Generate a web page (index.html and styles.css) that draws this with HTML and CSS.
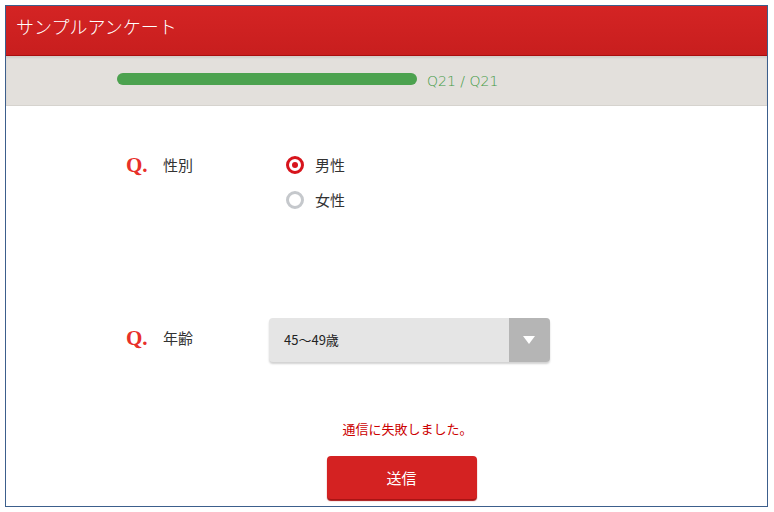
FILE: index.html
```html
<!DOCTYPE html>
<html lang="ja">
<head>
  <meta charset="UTF-8">
  <title>サンプルアンケート</title>
  <link rel="stylesheet" href="styles.css">
</head>
<body>
  <div class="frame">
    <header class="header">サンプルアンケート</header>
    <div class="progress">
      <div class="progress-bar"><div class="progress-fill" style="width: 100%"></div></div>
      <span class="progress-text">Q21 / Q21</span>
    </div>

    <form class="survey">
      <div class="question q-sex">
        <span class="q-mark">Q.</span>
        <span class="q-label">性別</span>
        <div class="options">
          <label class="radio checked"><span class="dot"></span>男性</label>
          <label class="radio"><span class="dot"></span>女性</label>
        </div>
      </div>

      <div class="question q-age">
        <span class="q-mark">Q.</span>
        <span class="q-label">年齢</span>
        <div class="select">
          <span class="select-value">45〜49歳</span>
          <span class="select-arrow"></span>
        </div>
      </div>

      <p class="error">通信に失敗しました。</p>
      <div class="actions">
        <button type="button" class="submit">送信</button>
      </div>
    </form>
  </div>
</body>
</html>
```

FILE: styles.css
```css
body {
  margin: 0;
  padding: 5px;
  background: #ffffff;
  font-family: "Noto Sans CJK JP", "Liberation Sans", sans-serif;
  color: #333333;
}

.frame {
  width: 761px;
  height: 500px;
  border: 1px solid #3c5f8c;
  overflow: hidden;
}

.header {
  height: 49px;
  border-bottom: 1px solid #a80e0e;
  background: linear-gradient(#d42424, #c81e1e);
  color: #ffffff;
  font-size: 18px;
  font-weight: 300;
  line-height: 40px;
  padding-left: 10px;
}

.progress {
  height: 49px;
  border-bottom: 1px solid #d6d3ce;
  background: #e3e0dc;
  display: flex;
  align-items: center;
  padding-left: 111px;
  box-shadow: inset 0 2px 2px rgba(0, 0, 0, 0.08);
}

.progress-bar {
  width: 300px;
  height: 12px;
  border-radius: 6px;
  background: #cfcbc5;
  margin-top: -4px;
}

.progress-fill {
  height: 100%;
  border-radius: 6px;
  background: #4ca24f;
}

.progress-text {
  margin-left: 10px;
  color: #3f9a43;
  font-family: "DejaVu Sans", sans-serif;
  font-size: 14px;
  font-weight: 300;
}

.survey {
  padding-top: 46px;
}

.question {
  display: flex;
  align-items: flex-start;
  padding-left: 120px;
}

.q-mark {
  width: 37px;
  color: #e8302a;
  font-family: "Liberation Serif", serif;
  font-weight: bold;
  font-size: 21px;
  line-height: 26px;
}

.q-label {
  font-size: 15px;
  line-height: 26px;
}

.q-sex .q-label {
  width: 123px;
}

.options {
  display: flex;
  flex-direction: column;
  gap: 9px;
}

.radio {
  display: flex;
  align-items: center;
  font-size: 15px;
  line-height: 26px;
  height: 26px;
}

.dot {
  width: 12px;
  height: 12px;
  border: 3px solid #c5c8cc;
  border-radius: 50%;
  margin-right: 11px;
  box-sizing: content-box;
  position: relative;
}

.radio.checked .dot {
  border-color: #d7141c;
}

.radio.checked .dot::after {
  content: "";
  position: absolute;
  left: 3px;
  top: 3px;
  width: 6px;
  height: 6px;
  border-radius: 50%;
  background: #d7141c;
}

.q-age {
  margin-top: 105px;
  align-items: center;
}

.q-age .q-mark,
.q-age .q-label {
  margin-top: -4px;
}

.q-age .q-label {
  width: 106px;
}

.select {
  width: 281px;
  height: 44px;
  display: flex;
  border-radius: 4px;
  background: #e5e5e5;
  box-shadow: 0 2px 2px rgba(0, 0, 0, 0.18);
  overflow: hidden;
}

.select-value {
  flex: 1;
  padding-left: 15px;
  font-size: 13px;
  line-height: 44px;
  color: #222222;
}

.select-arrow {
  width: 41px;
  background: #b5b5b5;
  position: relative;
}

.select-arrow::after {
  content: "";
  position: absolute;
  left: 14px;
  top: 18px;
  border-left: 6px solid transparent;
  border-right: 6px solid transparent;
  border-top: 8px solid #ffffff;
}

.error {
  margin: 57px 0 0;
  text-align: center;
  padding-left: 42px;
  color: #cc0000;
  font-size: 13px;
  line-height: 20px;
}

.actions {
  display: flex;
  justify-content: center;
  padding-left: 30px;
  margin-top: 17px;
}

.submit {
  width: 150px;
  height: 43px;
  border: none;
  border-radius: 4px;
  background: #d42222;
  box-shadow: 0 2px 1px #a81414;
  color: #ffffff;
  font-family: "Noto Sans CJK JP", sans-serif;
  font-size: 15px;
  cursor: pointer;
}
```
